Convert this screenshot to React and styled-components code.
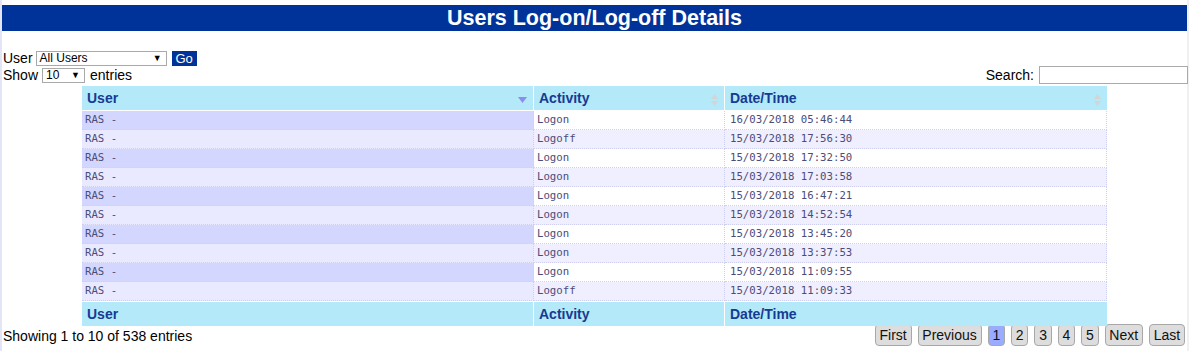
import styled, { createGlobalStyle } from 'styled-components';

const GlobalStyle = createGlobalStyle`
	html, body {
		margin: 0;
		padding: 0;
		background: #ffffff;
	}
	body {
		font-family: 'Liberation Sans', Arial, sans-serif;
		font-size: 14px;
		color: #000000;
	}
`

const rows = [
	['RAS -', 'Logon', '16/03/2018 05:46:44'],
	['RAS -', 'Logoff', '15/03/2018 17:56:30'],
	['RAS -', 'Logon', '15/03/2018 17:32:50'],
	['RAS -', 'Logon', '15/03/2018 17:03:58'],
	['RAS -', 'Logon', '15/03/2018 16:47:21'],
	['RAS -', 'Logon', '15/03/2018 14:52:54'],
	['RAS -', 'Logon', '15/03/2018 13:45:20'],
	['RAS -', 'Logon', '15/03/2018 13:37:53'],
	['RAS -', 'Logon', '15/03/2018 11:09:55'],
	['RAS -', 'Logoff', '15/03/2018 11:09:33'],
];

const pages = ['1', '2', '3', '4', '5'];

const SortDesc = () => (
	<svg width="9" height="6" viewBox="0 0 9 6">
		<path d="M0 0 L9 0 L4.5 6 Z" fill="#8c8cf0" />
	</svg>
)

const SortBoth = () => (
	<svg width="7" height="12" viewBox="0 0 7 12">
		<path d="M0 5 L7 5 L3.5 0 Z" fill="#d4d4d4" />
		<path d="M0 7 L7 7 L3.5 12 Z" fill="#d4d4d4" />
	</svg>
)

const Arrow = () => <span>▼</span>

const App = () => {
	return (
		<Page>
			<GlobalStyle />
			<TitleBar>Users Log-on/Log-off Details</TitleBar>

			<FilterRow>
				User
				<FakeSelect $width={131}>
					<span>All Users</span>
					<Arrow />
				</FakeSelect>
				<GoButton>Go</GoButton>
			</FilterRow>

			<LengthRow>
				<Left>
					Show
					<FakeSelect $width={43}>
						<span>10</span>
						<Arrow />
					</FakeSelect>
					entries
				</Left>
				<Right>
					Search:
					<SearchInput type="text" />
				</Right>
			</LengthRow>

			<Table>
				<HeadRow>
					<HeadCell>User<Icon><SortDesc /></Icon></HeadCell>
					<HeadCell>Activity<Icon><SortBoth /></Icon></HeadCell>
					<HeadCell $last>Date/Time<Icon><SortBoth /></Icon></HeadCell>
				</HeadRow>
				{rows.map((r, index) => (
					<Row key={index}>
						<Cell $bg={index % 2 === 0 ? '#d3d6ff' : '#e9eaff'}>{r[0]}</Cell>
						<Cell $bg={index % 2 === 0 ? '#ffffff' : '#efefff'}>{r[1]}</Cell>
						<Cell $bg={index % 2 === 0 ? '#ffffff' : '#efefff'} $pad={5}>{r[2]}</Cell>
					</Row>
				))}
				<FootRow>
					<HeadCell>User</HeadCell>
					<HeadCell>Activity</HeadCell>
					<HeadCell $last>Date/Time</HeadCell>
				</FootRow>
			</Table>

			<InfoRow>
				<Info>Showing 1 to 10 of 538 entries</Info>
				<Pager>
					<PageButton>First</PageButton>
					<PageButton>Previous</PageButton>
					{pages.map(p => (
						<PageButton key={p} $active={p === '1'}>{p}</PageButton>
					))}
					<PageButton>Next</PageButton>
					<PageButton>Last</PageButton>
				</Pager>
			</InfoRow>
		</Page>
	)
}

export default App;

const Page = styled.div`
	width: 1185px;
	min-height: 351px;
	padding-top: 5px;
	border-left: 2px solid #e4e4f7;
	border-right: 2px solid #f0f0f0;
	box-sizing: content-box;
`

const TitleBar = styled.div`
	height: 26px;
	background: #003399;
	color: #ffffff;
	font-weight: bold;
	font-size: 21.5px;
	line-height: 26px;
	text-align: center;
`

const FilterRow = styled.div`
	margin-top: 19px;
	height: 16px;
	display: flex;
	align-items: center;
	padding-left: 1px;
	line-height: 16px;
`

const FakeSelect = styled.div`
	display: flex;
	align-items: center;
	justify-content: space-between;
	width: ${p => p.$width}px;
	height: 15px;
	margin: 0 5px 0 3px;
	padding: 0 4px 0 3px;
	box-sizing: border-box;
	border: 1px solid #a9a9a9;
	font-size: 12px;
	background: #ffffff;

	& > span:last-child {
		font-size: 9px;
	}
`

const GoButton = styled.div`
	width: 25px;
	height: 15px;
	background: #003399;
	color: #ffffff;
	font-size: 13px;
	line-height: 15px;
	text-align: center;
`

const LengthRow = styled.div`
	height: 18px;
	display: flex;
	justify-content: space-between;
	align-items: center;
	padding-left: 1px;
`

const Left = styled.div`
	display: flex;
	align-items: center;

	${FakeSelect} {
		margin: 0 5px 0 4px;
	}
`

const Right = styled.div`
	display: flex;
	align-items: center;
`

const SearchInput = styled.input`
	width: 149px;
	height: 18px;
	margin-left: 5px;
	margin-right: -1px;
	box-sizing: border-box;
	border: 1px solid #aaaaaa;
	padding: 0 2px;
	outline: none;
`

const Table = styled.div`
	width: 1025px;
	margin: 2px auto 0;
`

const HeadRow = styled.div`
	display: grid;
	grid-template-columns: 452px 191px 382px;
	height: 25px;
	border-bottom: 1px solid #ffffff;
	box-sizing: border-box;
`

const FootRow = styled(HeadRow)`
	border-bottom: none;
	border-top: 1px solid #ffffff;
`

const HeadCell = styled.div`
	position: relative;
	background: #b3e9f8;
	color: #173a93;
	font-weight: bold;
	font-size: 14px;
	line-height: 24px;
	padding-left: 5px;
	border-right: ${p => p.$last ? 'none' : '1px solid #ffffff'};
	box-sizing: border-box;
`

const Icon = styled.span`
	position: absolute;
	right: 6px;
	top: 0;
	bottom: 0;
	display: flex;
	align-items: center;
	padding-top: 4px;

	svg {
		display: block;
	}
`

const Row = styled.div`
	display: grid;
	grid-template-columns: 452px 191px 382px;
	height: 19px;
`

const Cell = styled.div`
	background: ${p => p.$bg};
	font-family: 'DejaVu Sans Mono', 'Liberation Mono', monospace;
	font-size: 10.7px;
	color: #4c4c78;
	line-height: 18px;
	padding-left: ${p => p.$pad || 3}px;
	border-bottom: 1px dotted #cfcff2;
	border-right: 1px dotted #cfcff2;
	box-sizing: border-box;
	white-space: nowrap;
`

const InfoRow = styled.div`
	display: flex;
	justify-content: space-between;
	align-items: center;
	height: 22px;
	margin-top: -2px;
	padding-right: 2px;
`

const Info = styled.div`
	padding-left: 1px;
	padding-top: 1px;
`

const Pager = styled.div`
	display: flex;
	gap: 6px;
`

const PageButton = styled.div`
	height: 22px;
	padding: 0 3.8px;
	box-sizing: border-box;
	border: 1px solid #a8a8a8;
	border-radius: 4px;
	background: ${p => p.$active ? '#99acff' : '#dddddd'};
	color: #111111;
	font-size: 14px;
	line-height: 20px;
	cursor: pointer;
`
